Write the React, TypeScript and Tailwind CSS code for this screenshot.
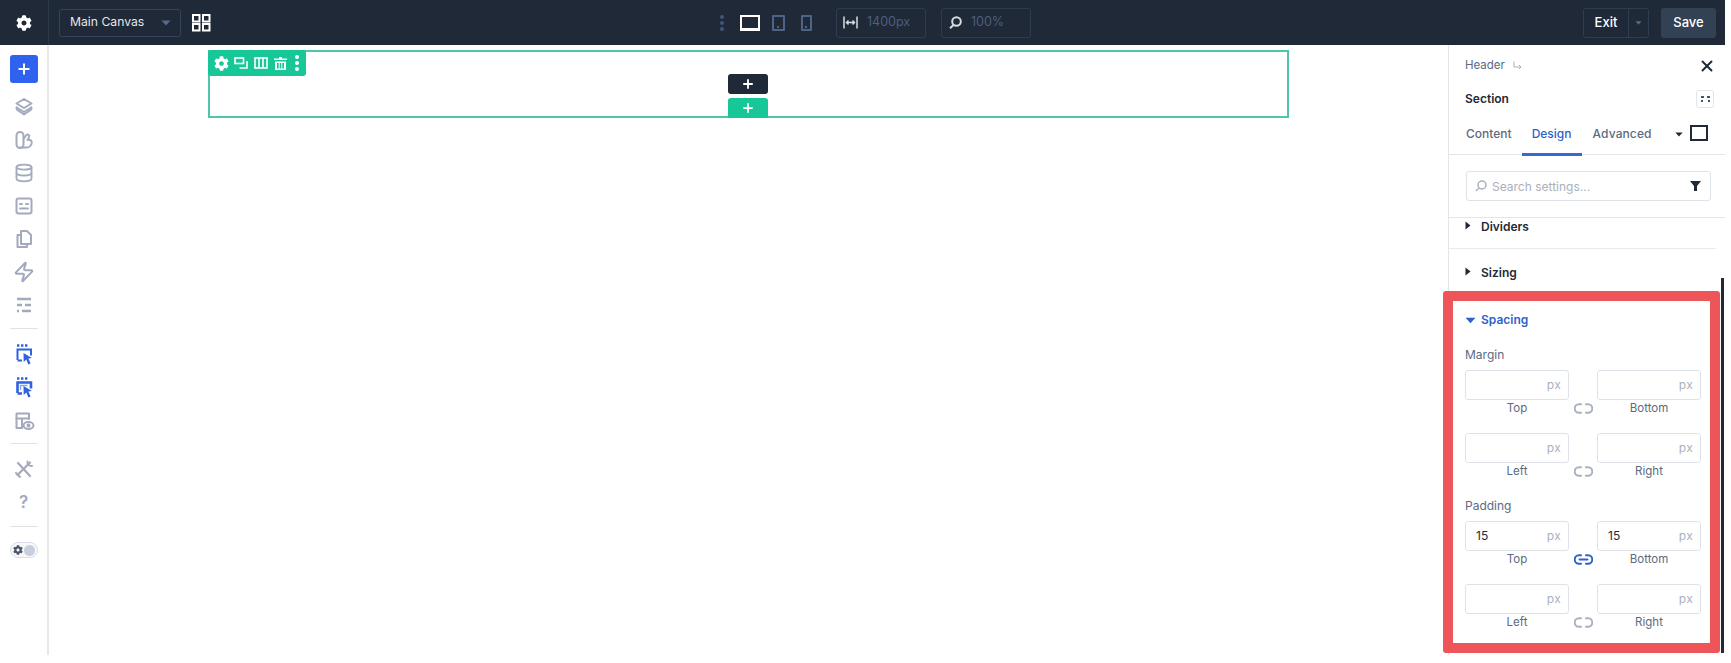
// App.tsx
import { Database, Zap, X, Plus } from 'lucide-react';
import { FaCog } from 'react-icons/fa';

const font = 'font-[Inter,"Liberation_Sans",sans-serif]';

function Caret({ className }: { className: string }) {
  return (
    <svg width="10" height="6" viewBox="0 0 10 6" className={className}>
      <path d="M0.5 0.5h9L5 5.5z" fill="currentColor" />
    </svg>
  );
}

function CaretRight() {
  return (
    <svg width="6" height="9" viewBox="0 0 6 9" className="mt-[2px] shrink-0 text-[#1f2937]">
      <path d="M0.5 0.5v8L5.5 4.5z" fill="currentColor" />
    </svg>
  );
}

function SideIcon({ children }: { children: React.ReactNode }) {
  return <div className="flex h-[33px] items-center justify-center">{children}</div>;
}

function Stroke({ children, color = '#a3aabd', size = 22 }: { children: React.ReactNode; color?: string; size?: number }) {
  return (
    <svg width={size} height={size} viewBox="0 0 22 22" fill="none" stroke={color} strokeWidth="2" strokeLinecap="round" strokeLinejoin="round">
      {children}
    </svg>
  );
}

function PickerIcon({ filled }: { filled?: boolean }) {
  return (
    <svg width="22" height="22" viewBox="0 0 22 22" fill="none">
      <path d="M4 2.5h2.4M8 2.5h2.4M12 2.5h2.4" stroke="#2f62dd" strokeWidth="2.4" />
      <path d="M4.5 17V6.5H18v6M4.5 17.5H9" stroke="#2f62dd" strokeWidth={filled ? 2.6 : 2} />
      {filled && <path d="M7.5 14V9.5h7" stroke="#8aa8ee" strokeWidth="1.4" />}
      <path d="M10.5 10l8.5 5-3.6.6 2.2 4.8-2.2 1-2.1-4.9-2.6 2.5z" fill="#2f62dd" />
    </svg>
  );
}

function LinkIcon({ active }: { active?: boolean }) {
  const color = active ? '#2f62c9' : '#a9b0bf';
  return (
    <svg width="19" height="11" viewBox="0 0 19 11" fill="none" stroke={color} strokeWidth="2" strokeLinecap="round">
      <path d="M7 1.2H5a4.2 4.2 0 0 0 0 8.6h2" />
      <path d="M12 1.2h2a4.2 4.2 0 0 1 0 8.6h-2" />
      {active && <path d="M5.5 5.5h8" />}
    </svg>
  );
}

function Field({ label, value }: { label: string; value?: string }) {
  return (
    <div>
      <div className="flex h-[30px] items-center justify-between rounded-[3px] border border-[#dfe3e9] pl-[10px] pr-[7px]">
        <span className="text-[12px] text-[#1f2937]">{value}</span>
        <span className="text-[12px] tracking-[0.3px] text-[#a9b0bd]">px</span>
      </div>
      <div className="h-4 text-center text-[11.5px] leading-4 text-[#5c6a82]">{label}</div>
    </div>
  );
}

function FieldRow({ a, b, value, active }: { a: string; b: string; value?: string; active?: boolean }) {
  return (
    <div className="grid grid-cols-[104px_28px_104px]">
      <Field label={a} value={value} />
      <div className="flex items-end justify-center pb-[2px]">
        <LinkIcon active={active} />
      </div>
      <Field label={b} value={value} />
    </div>
  );
}

function Sidebar() {
  return (
    <aside className="flex w-[49px] shrink-0 flex-col border-r-2 border-[#e6e8ec] pt-[10px]">
      <div className="mx-auto flex h-[28px] w-[28px] items-center justify-center rounded-[3px] bg-[#2f62ee]">
        <Plus size={16} strokeWidth={3} className="text-white" />
      </div>
      <div className="mt-[7px]">
        <SideIcon>
          <Stroke>
            <path d="M11 3l7.5 4.5L11 12 3.5 7.5z" />
            <path d="M3.7 11.5L11 16l7.3-4.5" />
            <path d="M3.7 11.5v2L11 18.5l7.3-5v-2" />
          </Stroke>
        </SideIcon>
        <SideIcon>
          <Stroke>
            <rect x="3.5" y="3" width="7" height="16" rx="3.5" />
            <path d="M10.5 10l3-4c1-1 3.5 0 2.5 2.5l-1.5 2.5c3-1 5 1 4 4-1 2.5-3 3.5-5 3.5H7" />
          </Stroke>
        </SideIcon>
        <SideIcon>
          <Database size={20} color="#a3aabd" strokeWidth={2.2} />
        </SideIcon>
        <SideIcon>
          <Stroke>
            <rect x="3.5" y="3.5" width="15" height="15" rx="2" />
            <path d="M7 9h2M13 9h2M7 13.5h8" />
          </Stroke>
        </SideIcon>
        <SideIcon>
          <Stroke>
            <path d="M8 3h6l4 4v9H8z" />
            <path d="M8 7H4.5v12H14v-3" />
          </Stroke>
        </SideIcon>
        <SideIcon>
          <Zap size={22} color="#a3aabd" strokeWidth={2.2} />
        </SideIcon>
        <SideIcon>
          <Stroke>
            <path d="M4 5h14M4 11h5M12 11h6M4 17h2M9 17h9" strokeWidth="2.4" strokeLinecap="butt" />
          </Stroke>
        </SideIcon>
      </div>
      <div className="mx-auto mt-[7px] h-px w-[28px] bg-[#dfe2e7]" />
      <div className="mt-[8px]">
        <SideIcon>
          <PickerIcon />
        </SideIcon>
        <SideIcon>
          <PickerIcon filled />
        </SideIcon>
        <div className="mt-[1px]">
          <SideIcon>
            <Stroke>
              <path d="M9 18H3.5V3.5H16V9" />
              <path d="M3.5 8.5H16M9 8.5V18" />
              <ellipse cx="15.5" cy="15.5" rx="5" ry="3.4" />
              <circle cx="15.5" cy="15.5" r="1" />
            </Stroke>
          </SideIcon>
        </div>
      </div>
      <div className="mx-auto mt-[6px] h-px w-[28px] bg-[#dfe2e7]" />
      <div className="mt-[8px]">
        <SideIcon>
          <Stroke>
            <path d="M5 5l12 13M17 4.5L4.5 17" strokeWidth="2.2" />
            <path d="M14.5 3.5a4 4 0 0 0 4.5 4.5M3 15l4 4" />
          </Stroke>
        </SideIcon>
        <div className="mt-[1px]">
          <SideIcon>
            <span className="text-[17px] font-semibold text-[#a3aabd]">?</span>
          </SideIcon>
        </div>
      </div>
      <div className="mx-auto mt-[7px] h-px w-[28px] bg-[#dfe2e7]" />
      <div className="mx-auto mt-[15px] flex h-[16px] w-[28px] items-center justify-between rounded-full border border-[#d9dde7] bg-[#f7f8fa] px-[2px]">
        <FaCog size={10} className="text-[#4b5568]" />
        <span className="h-[11px] w-[11px] rounded-full bg-[#c8cede]" />
      </div>
    </aside>
  );
}

function TopBar() {
  return (
    <header className="flex h-[45px] shrink-0 items-center bg-[#1f2937]">
      <div className="flex h-full w-[49px] items-center justify-center border-r border-[#2c3a4e]">
        <FaCog size={16} className="text-white" />
      </div>
      <div className="ml-[10px] flex h-[28px] w-[122px] items-center justify-between rounded-[3px] border border-[#35445a] pl-[10px] pr-[9px]">
        <span className="text-[12.2px] text-[#e5e7eb]">Main Canvas</span>
        <Caret className="text-[#566a8c]" />
      </div>
      <svg width="19" height="18" viewBox="0 0 19 18" fill="none" stroke="white" strokeWidth="2" className="ml-[11px]">
        <rect x="1" y="1" width="6.5" height="6.5" />
        <rect x="11" y="1" width="6.5" height="6.5" />
        <rect x="1" y="10" width="6.5" height="6.5" />
        <rect x="11" y="10" width="6.5" height="6.5" />
      </svg>
      <div className="ml-[509px] flex flex-col gap-[2px]">
        <span className="h-[4px] w-[4px] rounded-full bg-[#43567a]" />
        <span className="h-[4px] w-[4px] rounded-full bg-[#43567a]" />
        <span className="h-[4px] w-[4px] rounded-full bg-[#43567a]" />
      </div>
      <div className="ml-[16px] h-[16px] w-[20px] border-2 border-b-[3px] border-white" />
      <div className="relative ml-[12px] h-[16px] w-[13px] rounded-[1px] border-2 border-[#4f6288]">
        <span className="absolute bottom-[1px] left-[2.5px] h-[2px] w-[2px] bg-[#4f6288]" />
      </div>
      <div className="relative ml-[16px] h-[16px] w-[11px] rounded-[1px] border-2 border-[#4f6288]">
        <span className="absolute bottom-[1px] left-[1.5px] h-[2px] w-[2px] bg-[#4f6288]" />
      </div>
      <div className="ml-[24px] flex h-[30px] w-[90px] items-center rounded-[3px] border border-[#2f3c50] pl-[6px]">
        <svg width="15" height="13" viewBox="0 0 15 13" fill="none" stroke="#d7dbe2" strokeWidth="1.5">
          <path d="M1 0.5v12M14 0.5v12" />
          <path d="M3.5 6.5h8M5.5 4.5l-2 2 2 2M9.5 4.5l2 2-2 2" />
        </svg>
        <span className="ml-[9px] text-[12.5px] text-[#4d5e7e]">1400px</span>
      </div>
      <div className="ml-[15px] flex h-[30px] w-[90px] items-center rounded-[3px] border border-[#2f3c50] pl-[7px]">
        <svg width="13" height="13" viewBox="0 0 13 13" fill="none" stroke="#d7dbe2" strokeWidth="2">
          <circle cx="7.5" cy="5.5" r="4.3" />
          <path d="M4.5 9L1 12.2" />
        </svg>
        <span className="ml-[9px] text-[12.5px] text-[#4d5e7e]">100%</span>
      </div>
      <div className="ml-auto flex h-[30px] w-[66px] rounded-[3px] border border-[#303d51]">
        <span className="flex w-[45px] items-center justify-center border-r border-[#303d51] text-[13px] font-medium text-white">Exit</span>
        <span className="flex flex-1 items-center justify-center">
          <Caret className="h-[4px] w-[7px] text-[#566a8c]" />
        </span>
      </div>
      <div className="ml-[12px] mr-[9px] flex h-[30px] w-[55px] items-center justify-center rounded-[3px] bg-[#334155] text-[13px] font-medium text-white">
        Save
      </div>
    </header>
  );
}

function Canvas() {
  return (
    <main className="min-w-0 flex-1 pl-[159px] pt-[5px]">
      <section className="relative h-[68px] w-[1081px] border-2 border-[#4fc5ae]">
        <div className="absolute -left-[2px] -top-[2px] flex h-[26px] w-[98px] items-center rounded-[3px] bg-[#17c797] pl-[6px] text-white">
          <FaCog size={15} />
          <svg width="14" height="12" viewBox="0 0 14 12" fill="none" stroke="white" strokeWidth="1.6" className="ml-[5px]">
            <rect x="1" y="1" width="8.5" height="5.5" />
            <path d="M13 4v7H5.5" />
          </svg>
          <svg width="14" height="12" viewBox="0 0 14 12" fill="none" stroke="white" strokeWidth="1.6" className="ml-[6px]">
            <rect x="1" y="1" width="12" height="10" />
            <path d="M5 1v10M9 1v10" />
          </svg>
          <svg width="13" height="13" viewBox="0 0 13 13" fill="white" className="ml-[6px]">
            <path d="M5 0h3v1.5h5V3H0V1.5h5zM1 4.5h11V13H1zM3 6v5.5h1.7V6zM5.7 6v5.5h1.6V6zM8.3 6v5.5H10V6z" />
          </svg>
          <div className="ml-[8px] flex flex-col gap-[2px]">
            <span className="h-[4px] w-[4px] rounded-full bg-white" />
            <span className="h-[4px] w-[4px] rounded-full bg-white" />
            <span className="h-[4px] w-[4px] rounded-full bg-white" />
          </div>
        </div>
        <div className="absolute left-[518px] top-[22px] flex h-[20px] w-[40px] items-center justify-center rounded-[3px] bg-[#1f2937] text-white">
          <Plus size={14} strokeWidth={3.2} />
        </div>
        <div className="absolute -bottom-[2px] left-[518px] flex h-[20px] w-[40px] items-center justify-center rounded-t-[3px] bg-[#17c797] text-white">
          <Plus size={14} strokeWidth={3} />
        </div>
      </section>
    </main>
  );
}

function Panel() {
  return (
    <aside className="relative w-[277px] shrink-0 border-l border-[#e2e5ea]">
      <div className="flex h-[40px] items-center justify-between pl-[16px] pr-[9px] pt-[1px]">
        <div className="flex items-center gap-[8px] text-[11.5px] text-[#5c6a82]">
          Header
          <svg width="9" height="9" viewBox="0 0 9 9" fill="none" stroke="#a9b0bf" strokeWidth="1">
            <path d="M1 0.5v5.5h7M6 4l2 2-2 2" />
          </svg>
        </div>
        <X size={18} strokeWidth={2.6} className="text-[#1f2937]" />
      </div>
      <div className="flex h-[28px] items-center justify-between pl-[16px] pr-[11px]">
        <span className="text-[12px] font-semibold text-[#1f2937]">Section</span>
        <div className="flex h-[18px] w-[18px] flex-col items-center justify-center gap-[2px] rounded-[3px] border border-[#e2e5ea]">
          <span className="h-[2px] w-[9px] border-x-[3px] border-[#4b5568]" />
          <span className="h-[2px] w-[9px] border-x-[2px] border-[#4b5568]" />
        </div>
      </div>
      <div className="flex h-[42px] items-start border-b border-[#e2e5ea] pl-[17px] pr-[17px] text-[12px] font-medium text-[#5c6a82]">
        <span className="mt-[12px]">Content</span>
        <span className="relative ml-[10px] flex h-[42px] w-[60px] justify-center pt-[12px] text-[#2f62c9]">
          Design
          <span className="absolute -bottom-[1px] left-0 h-[3px] w-full bg-[#3a67d6]" />
        </span>
        <span className="ml-[11px] mt-[12px] tracking-[0.1px]">Advanced</span>
        <Caret className="ml-auto mt-[19px] h-[5px] w-[8px] text-[#1f2937]" />
        <span className="ml-[7px] mt-[12px] h-[16px] w-[18px] border-2 border-[#1f2937]" />
      </div>
      <div className="h-[63px] border-b border-[#e2e5ea] pl-[17px] pr-[14px] pt-[16px]">
        <div className="flex h-[30px] items-center rounded-[3px] border border-[#dfe3e9] pl-[8px] pr-[9px]">
          <svg width="12" height="12" viewBox="0 0 12 12" fill="none" stroke="#a9b0bd" strokeWidth="1.5">
            <circle cx="7" cy="5" r="4" />
            <path d="M4 8L1 11" />
          </svg>
          <span className="ml-[5px] pt-[1px] text-[12px] text-[#a9b0bd]">Search settings...</span>
          <svg width="11" height="10" viewBox="0 0 11 10" className="ml-auto">
            <path d="M0 0h11L7 5v5H4V5z" fill="#1f2937" />
          </svg>
        </div>
      </div>
      <div className="mr-[9px] flex h-[31px] items-start gap-[10px] border-b border-[#e8eaee] pl-[16px] pt-[1px]">
        <CaretRight />
        <span className="text-[12px] font-semibold leading-[16px] text-[#1f2937]">Dividers</span>
      </div>
      <div className="flex h-[42px] items-start gap-[10px] pl-[16px] pt-[16px]">
        <CaretRight />
        <span className="text-[12px] font-semibold leading-[16px] text-[#1f2937]">Sizing</span>
      </div>
      <div className="-ml-[6px] h-[362px] w-[277px] rounded-[3px] border-[10px] border-[#ee5558] bg-white pl-[12px] pt-[10px]">
        <div className="flex h-[18px] items-center gap-[5px]">
          <Caret className="h-[7px] w-[11px] text-[#2f62c9]" />
          <span className="text-[12px] font-semibold text-[#2f62c9]">Spacing</span>
        </div>
        <div className="mb-[7px] mt-[18px] h-4 text-[12px] leading-4 text-[#5c6a82]">Margin</div>
        <FieldRow a="Top" b="Bottom" />
        <div className="mt-[17px]">
          <FieldRow a="Left" b="Right" />
        </div>
        <div className="mb-[7px] mt-[19px] h-4 text-[12px] leading-4 text-[#5c6a82]">Padding</div>
        <FieldRow a="Top" b="Bottom" value="15" active />
        <div className="mt-[17px]">
          <FieldRow a="Left" b="Right" />
        </div>
      </div>
      <div className="absolute bottom-[2px] right-[1px] top-[233px] w-[3px] bg-[#1f2937]" />
    </aside>
  );
}

export default function App() {
  return (
    <div className={`flex h-[655px] w-[1725px] flex-col overflow-hidden bg-white ${font}`}>
      <TopBar />
      <div className="flex min-h-0 flex-1">
        <Sidebar />
        <Canvas />
        <Panel />
      </div>
    </div>
  );
}
